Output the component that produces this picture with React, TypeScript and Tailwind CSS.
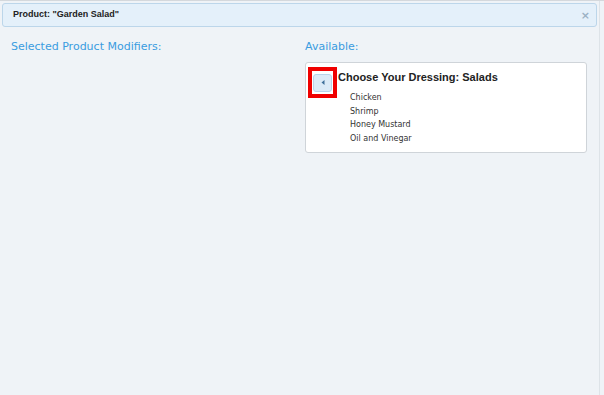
export default function App() {
    const items = ["Chicken", "Shrimp", "Honey Mustard", "Oil and Vinegar"]

    return (
        <main className="w-[604px] h-[395px] bg-[#eff3f7] border-t border-[#d4d8dc] font-['DejaVu_Sans',sans-serif] flex">
            <div className="w-[600px] h-full border-r border-[#dde3e8] pt-[2px] px-[2px]">
                {/* Header */}
                <div className="h-[24px] flex items-center justify-between pl-[10px] pr-[6px] rounded-[3px] border border-[#bcd6ea] bg-[#e4f0fa]">
                    <span className="text-[9px] font-bold text-[#222] font-['Liberation_Sans',sans-serif]">Product: "Garden Salad"</span>
                    <span className="text-[11px] font-bold text-[#9ab0c4] leading-none">×</span>
                </div>

                {/* Columns */}
                <div className="flex mt-[13px]">
                    <section className="w-[303px] pl-[9px]">
                        <h3 className="text-[11px] text-[#3a9ce0] leading-[14px]">Selected Product Modifiers:</h3>
                    </section>
                    <section className="flex-1 pr-[10px]">
                        <h3 className="text-[11px] text-[#3a9ce0] leading-[14px]">Available:</h3>
                        <div className="mt-[8px] h-[91px] bg-white border border-[#cfd4d9] rounded-[3px] pl-[2px] pt-[4px]">
                            <div className="flex items-start">
                                <div className="w-[29px] h-[31px] border-[4px] border-[#f00000] bg-white flex items-center justify-center">
                                    <div className="w-[19px] h-[18px] rounded-[3px] border border-[#b9d3ea] bg-[#dceaf7] flex items-center justify-center">
                                        <svg width="4" height="5" viewBox="0 0 4 5"><path d="M3.5 0 L0.5 2.5 L3.5 5 Z" fill="#3f6f9a" /></svg>
                                    </div>
                                </div>
                                <div className="ml-[1px] pt-[3px]">
                                    <h4 className="text-[11px] font-bold text-[#222] leading-[15px] font-['Liberation_Sans',sans-serif]">Choose Your Dressing: Salads</h4>
                                    <ul className="mt-[6px] ml-[12px]">
                                        {items.map((item) => (
                                            <li key={item} className="text-[8px] text-[#333] leading-[13.5px]">{item}</li>
                                        ))}
                                    </ul>
                                </div>
                            </div>
                        </div>
                    </section>
                </div>
            </div>
        </main>
    )
}
